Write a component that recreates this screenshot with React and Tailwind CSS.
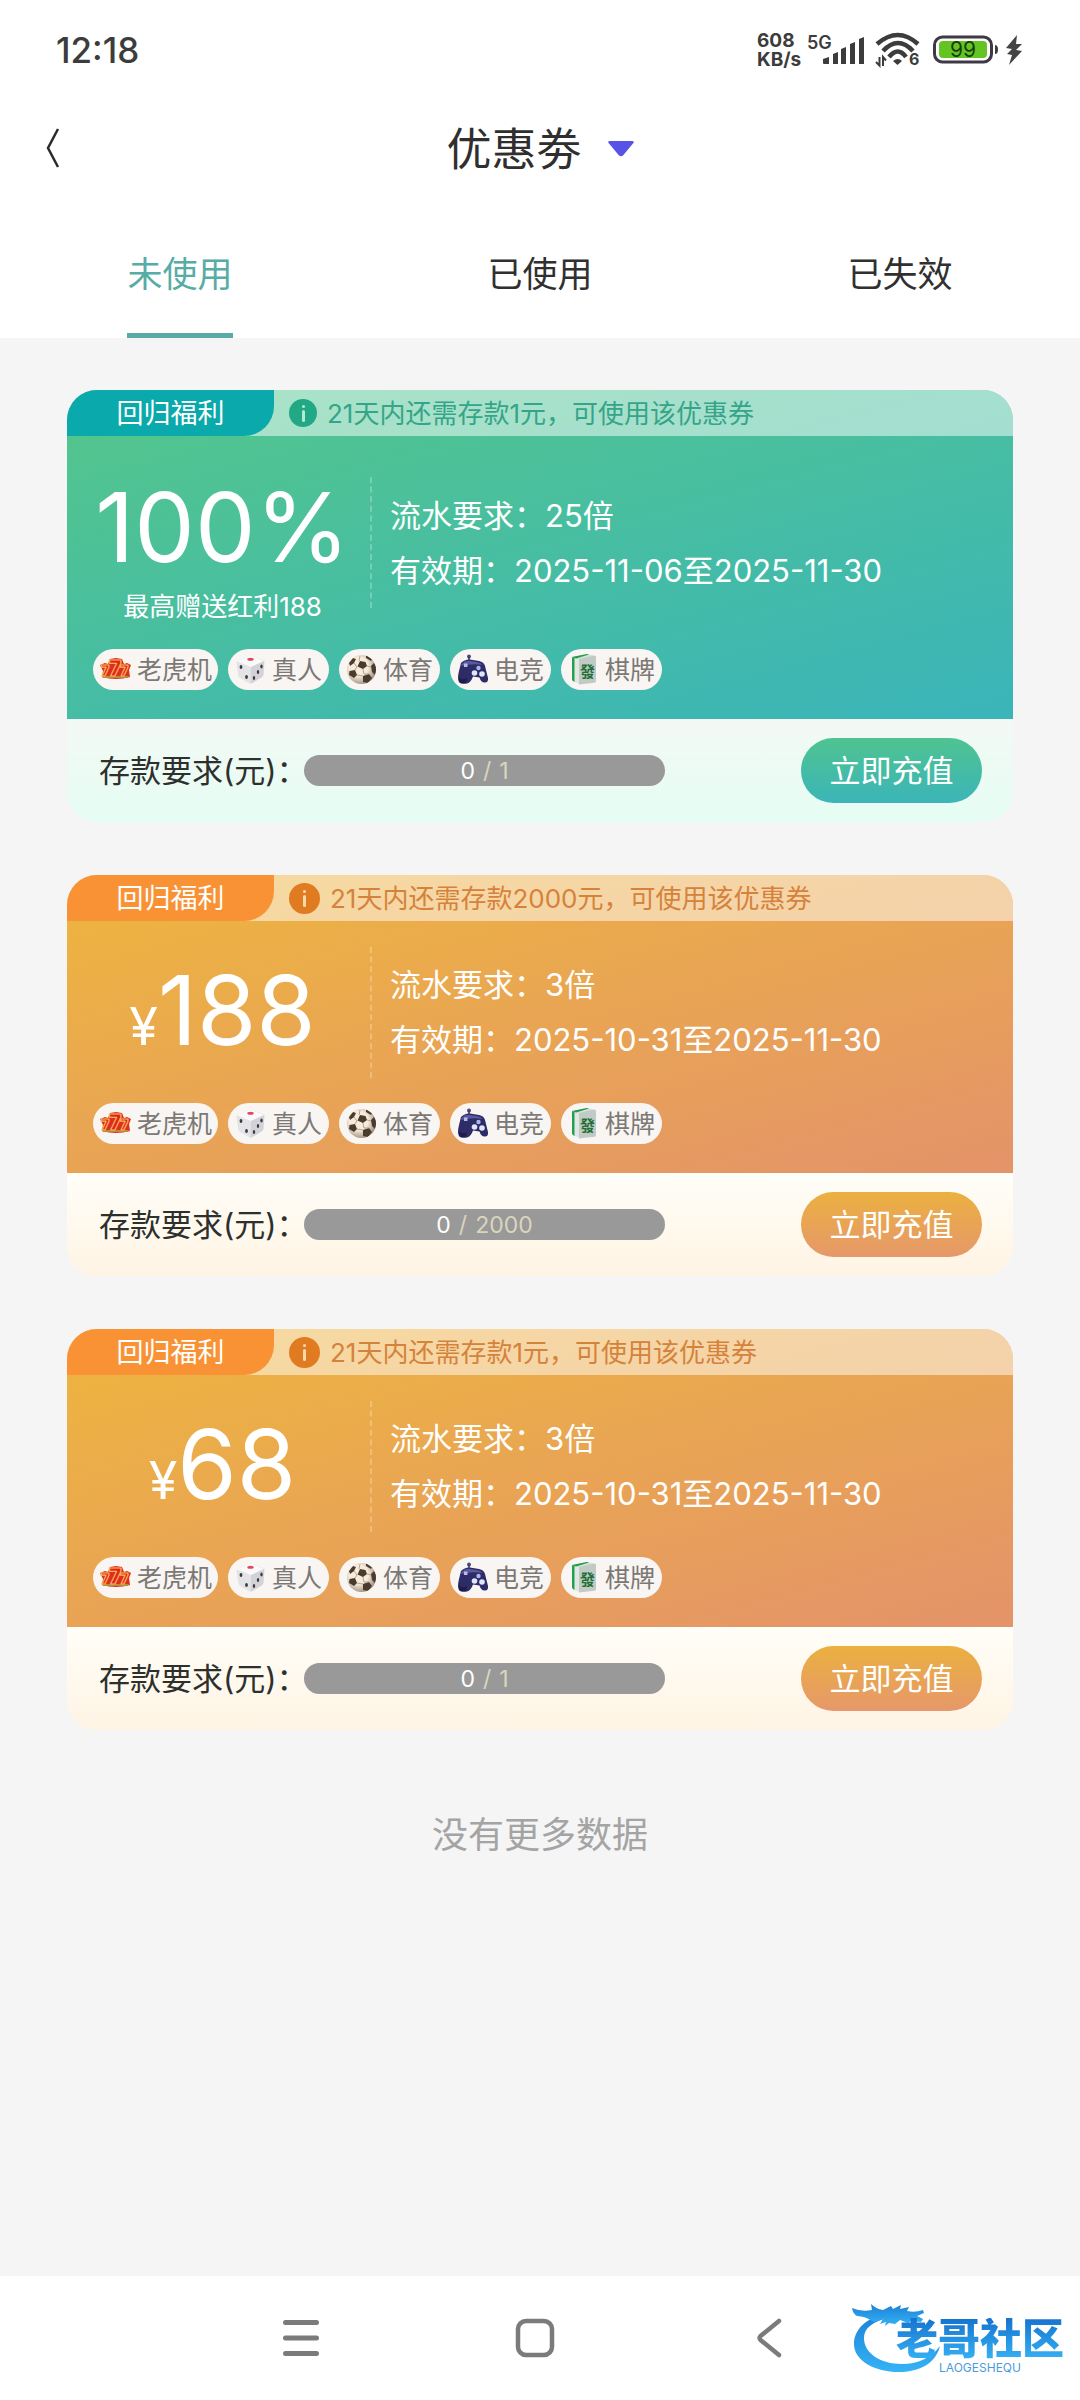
import React from "react";

const THEMES = {
  green: {
    head: "bg-[linear-gradient(165deg,#52c58e_8%,#3bb5b8_96%)]",
    badge: "bg-[#0aa9ab]",
    notice: "text-[#34a588]",
    dot: "bg-[#22a884] size-7",
    dotMark: "bg-[#b5ead3]",
    foot: "bg-[linear-gradient(180deg,#f3f9f4,#e5fdf4)]",
    button: "bg-[linear-gradient(180deg,#4fc391,#3bb5b8)]",
  },
  orange: {
    head: "bg-[linear-gradient(165deg,#edb341_8%,#e49469_98%)]",
    badge: "bg-[#f99234]",
    notice: "text-[#d5823b]",
    dot: "bg-[#e17b22] size-[31px]",
    dotMark: "bg-[#f8d9a8]",
    foot: "bg-[linear-gradient(180deg,#fffef8,#fff4e4)]",
    button: "bg-[linear-gradient(180deg,#ebb040,#e6986a)]",
  },
};

const COUPONS = [
  {
    id: "c1",
    theme: "green",
    notice: "21天内还需存款1元，可使用该优惠券",
    value: "100%",
    sub: "最高赠送红利188",
    times: "25倍",
    dates: "2025-11-06至2025-11-30",
    goal: 1,
  },
  {
    id: "c2",
    theme: "orange",
    notice: "21天内还需存款2000元，可使用该优惠券",
    currency: "¥",
    value: "188",
    times: "3倍",
    dates: "2025-10-31至2025-11-30",
    goal: 2000,
  },
  {
    id: "c3",
    theme: "orange",
    notice: "21天内还需存款1元，可使用该优惠券",
    currency: "¥",
    value: "68",
    times: "3倍",
    dates: "2025-10-31至2025-11-30",
    goal: 1,
  },
];

function SlotIcon() {
  const seven = {
    fontFamily: "Inter, sans-serif",
    fontWeight: 900,
    stroke: "#f6b25a",
    strokeWidth: 1.2,
    strokeLinejoin: "round",
    fill: "#e2231a",
  };
  return (
    <svg viewBox="0 0 31 31" className="size-[31px]" aria-hidden="true">
      <path d="M0 11l5-2 3 1 2-5 6-1 6 1 2 5 3-1 4 2-2 5 1 7q-14 4-28 0l1-6z" fill="#dd2f20" />
      <path d="M3 24l25 0 1-2-27 0z" fill="#b98a3a" />
      <text x="1" y="22" fontSize="14" {...seven}>7</text>
      <text x="20" y="22" fontSize="14" {...seven}>7</text>
      <text x="9" y="22" fontSize="21" {...seven}>7</text>
    </svg>
  );
}

function DiceIcon() {
  return (
    <svg viewBox="0 0 31 31" className="size-[31px]" aria-hidden="true">
      <path d="M14 2q1.500-.6 3 0l11 4q1.500.6 1.500 2l-1 13q-.2 1.500-1.500 2.300l-10 6q-1.500.7-3 0L5 24q-1.500-.7-1.700-2.300L1.500 9q0-1.500 1.500-2.200z" fill="#e4e4e6" />
      <path d="M14 2q1.500-.6 3 0l12 5-13 6L2 7.300z" fill="#fafafa" />
      <path d="M16 13l13.300-6-1 14q-.2 1.500-1.500 2.300l-10 6-1 .2z" fill="#d3d3d7" />
      <ellipse cx="15.500" cy="5.300" rx="3.200" ry="1.500" fill="#e5455c" />
      <ellipse cx="6" cy="13" rx="1.400" ry="2" fill="#3a3a44" />
      <ellipse cx="11.500" cy="23" rx="1.400" ry="2" fill="#3a3a44" />
      <ellipse cx="26.500" cy="12.500" rx="1.200" ry="1.900" fill="#3a3a44" />
      <ellipse cx="23" cy="18" rx="1.200" ry="1.900" fill="#3a3a44" />
      <ellipse cx="19" cy="24" rx="1.200" ry="1.900" fill="#3a3a44" />
    </svg>
  );
}

function BallIcon() {
  return (
    <svg viewBox="0 0 31 31" className="size-[31px]" aria-hidden="true">
      <defs>
        <radialGradient id="ball" cx="0.4" cy="0.4" r="0.65">
          <stop offset="0.5" stopColor="#f6ebdc" />
          <stop offset="1" stopColor="#9c8a78" />
        </radialGradient>
        <clipPath id="ballClip"><circle cx="15.500" cy="15.500" r="14.500" /></clipPath>
      </defs>
      <circle cx="15.500" cy="15.500" r="14.500" fill="url(#ball)" />
      <g clipPath="url(#ballClip)" fill="#4a3b2c">
        <path d="M14 7l5.500 1 1.500 4-4 3-5.500-2.500z" />
        <path d="M3 9l4-5 3 1-2 4-4 3z" />
        <path d="M3.500 17l5.500-1 2 5-3 3-5-3z" />
        <path d="M17 22l6-2 3 4-4 5-5-1z" />
        <path d="M25 12l3-3 3 6-2 6-3-3z" />
        <path d="M20 1l6 4-1 2-5-3z" />
      </g>
      <g clipPath="url(#ballClip)" stroke="#a39380" strokeWidth="0.800" fill="none">
        <path d="M8 9l3 4-2 3M17 15l1 5 5 0M21 12l4 1M11 21l6 1M13 7l1-5" />
      </g>
    </svg>
  );
}

function PadIcon() {
  return (
    <svg viewBox="0 0 31 31" className="size-[31px]" aria-hidden="true">
      <circle cx="12" cy="2.500" r="2" fill="#4b4a7d" />
      <path d="M12 3v5" stroke="#37366e" strokeWidth="1.500" />
      <path d="M4 9q4-4 9-3.500l9 1.500q5 1 6 5l3 12q.5 5-3.500 4.500-3.500 0-5-5l-6.500-1q-2 6-6 7-5 1-8-1.500Q0 25 2 17z" fill="#2d2c66" />
      <path d="M4.500 10q4-4 9-3l8 1.500q3 .8 4 2.500-9-2-21 1z" fill="#5a59a0" />
      <path d="M7 9.500h3.500v3.500H7z" fill="#b9bbe6" />
      <circle cx="17.500" cy="19" r="2.800" fill="#dfe6fb" />
      <circle cx="25" cy="20" r="2.800" fill="#dfe6fb" />
      <circle cx="21.500" cy="14" r="2.200" fill="#a9b6ea" />
      <path d="M2 23q3 4 8 1l-1 4q-4 3-7 0z" fill="#1d1c4b" />
    </svg>
  );
}

function TileIcon() {
  return (
    <svg viewBox="0 0 31 31" className="size-[31px]" aria-hidden="true">
      <path d="M4 3l15-3 8 2-16 4z" fill="#cfe3d6" />
      <path d="M4 3l7 3v24l-6-3q-1-.5-1-2z" fill="#dfe8e2" />
      <path d="M4 3l2.500 1v24L5 27q-1-.5-1-2z" fill="#22a04f" />
      <path d="M11 5l15-3.500q2 0 2 1.500v24q0 1.500-1.500 1.700L11 30.500z" fill="#c2cac5" />
      <path d="M4 3l15-3 2 .5L8 4.500z" fill="#1f9a4b" />
      <text x="12" y="23" fontSize="15" fontWeight="700" fontFamily="Noto Sans CJK TC, sans-serif" fill="#1d6f35">發</text>
    </svg>
  );
}

const CATEGORIES = [
  { name: "老虎机", Icon: SlotIcon },
  { name: "真人", Icon: DiceIcon },
  { name: "体育", Icon: BallIcon },
  { name: "电竞", Icon: PadIcon },
  { name: "棋牌", Icon: TileIcon },
];

function StatusBar() {
  return (
    <div className="flex h-[100px] items-center justify-between pl-14 pr-[57px] text-[#3c3c3c]">
      <time className="text-[35px] font-medium leading-none">12:18</time>
      <div className="flex items-center">
        <div className="w-[50px] text-[19px] font-bold leading-[19px]">
          <div>608</div>
          <div>KB/s</div>
        </div>
        <svg viewBox="0 0 58 36" className="h-9 w-[58px] overflow-visible" aria-label="5G">
          <text x="0" y="17" fontSize="18" fontWeight="600" fontFamily="Inter, sans-serif" fill="#3c3c3c">5G</text>
          <g fill="#3c3c3c">
            <path d="M16 27l6-2v7h-5q-1 0-1-1z" />
            <path d="M26 22l5-2v12h-5z" />
            <path d="M34 17l5-2v17h-5z" />
            <path d="M43 12l5-2v22h-5z" />
            <path d="M52 7l5-2v27h-5z" />
          </g>
        </svg>
        <svg viewBox="0 0 46 36" className="ml-2.5 h-9 w-[46px] overflow-visible" aria-label="Wi-Fi">
          <g fill="none" stroke="#3c3c3c" strokeWidth="4.500">
            <path d="M2 12Q23-6 43 12" />
            <path d="M8 19Q23 3 38 19" />
            <path d="M14 25Q23 14 31 25" />
          </g>
          <path d="M18 29q5-4 9 0l-4.500 4z" fill="#3c3c3c" />
          <path d="M1 30l3.500 3.500V25M8 34v-9l3 3.500" stroke="#3c3c3c" strokeWidth="2" fill="none" />
          <text x="34" y="33" fontSize="16" fontWeight="700" fontFamily="Inter, sans-serif" fill="#3c3c3c">6</text>
        </svg>
        <svg viewBox="0 0 68 30" className="ml-3 h-[30px] w-[68px] overflow-visible" aria-label="电量99%">
          <rect x="1.500" y="2" width="57" height="25" rx="8" fill="#fff" stroke="#3f3845" strokeWidth="3" />
          <rect x="6" y="6" width="48" height="17" rx="4" fill="#64c522" />
          <path d="M62 10q3 0 3 4.500t-3 4.500z" fill="#3c3c3c" />
          <text x="30" y="22" textAnchor="middle" fontSize="21" fontWeight="400" fontFamily="Inter, sans-serif" fill="#173f0c">99</text>
        </svg>
        <svg viewBox="0 0 18 30" className="ml-1 h-[30px] w-[18px]" aria-label="充电中">
          <path d="M12 0L1 13l6 1-5 5 5 1-3 10L17 16l-6-1 6-6-6 0z" fill="#444" />
        </svg>
      </div>
    </div>
  );
}

function Coupon({ data }) {
  const t = THEMES[data.theme];
  return (
    <article className="overflow-hidden rounded-[30px]">
      <div className={t.head}>
        <div className="flex h-[46px] items-center bg-white/50">
          <div className={`${t.badge} flex h-full w-[207px] items-center justify-center rounded-br-[30px] pt-0.5 text-[27px] text-white`}>
            回归福利
          </div>
          <span className={`${t.dot} ml-[15px] flex flex-col items-center justify-center gap-0.5 rounded-full`} aria-hidden="true">
            <span className={`${t.dotMark} size-[3px] rounded-full`} />
            <span className={`${t.dotMark} h-3 w-[3px] rounded-full`} />
          </span>
          <p className={`${t.notice} ml-2.5 pt-0.5 text-[26px] leading-none`}>{data.notice}</p>
        </div>

        <div className={`flex items-center ${data.sub ? "h-[213px]" : "h-[182px]"}`}>
          <div className="flex w-[303px] flex-col items-center pl-2 pt-3 text-white">
            <div className="flex items-baseline text-[96px] leading-[108px]">
              {data.currency && <span className="text-[52px]">{data.currency}</span>}
              <span>{data.value}</span>
            </div>
            {data.sub && <p className="mt-2 text-[26px] leading-9">{data.sub}</p>}
          </div>
          <div className="h-[131px] border-l-2 border-dashed border-white/25" />
          <dl className="ml-[18px] text-[31px] leading-[55px] text-white">
            <div className="flex">
              <dt>流水要求：</dt>
              <dd>{data.times}</dd>
            </div>
            <div className="flex">
              <dt>有效期：</dt>
              <dd>{data.dates}</dd>
            </div>
          </dl>
        </div>

        <ul className="flex gap-2.5 pb-[29px] pl-[26px]">
          {CATEGORIES.map(({ name, Icon }) => (
            <li key={name} className="flex h-[41px] min-w-[101px] items-center gap-1.5 rounded-full bg-[#f8f5f2] pl-[7px] pr-1.5 text-[25px] leading-none text-[#7b7875]">
              <Icon />
              <span className="pt-0.5">{name}</span>
            </li>
          ))}
        </ul>
      </div>

      <div className={`${t.foot} flex items-center py-[19px] pl-8 pr-[31px]`}>
        <span id={`${data.id}-label`} className="w-[205px] whitespace-nowrap text-[31px] leading-none text-[#2e302e]">存款要求(元)：</span>
        <div
          role="progressbar"
          aria-labelledby={`${data.id}-label`}
          aria-valuemin={0}
          aria-valuenow={0}
          aria-valuemax={data.goal}
          className="flex h-[31px] w-[361px] items-center justify-center gap-2 rounded-full bg-[#999] pt-0.5 text-[23px] leading-none text-[#d9d6bd]"
        >
          <span className="text-white">0</span>
          <span>/</span>
          <span>{data.goal}</span>
        </div>
        <button type="button" className={`${t.button} ml-auto h-[65px] w-[181px] rounded-full text-[31px] leading-none text-white`}>
          立即充值
        </button>
      </div>
    </article>
  );
}

function SiteLogo() {
  return (
    <div className="absolute bottom-6 right-4 flex items-end">
      <svg viewBox="0 0 92 72" className="-mr-12 h-[72px] w-[92px]" aria-hidden="true">
        <defs>
          <linearGradient id="dragon" x1="0" y1="0" x2="0" y2="1">
            <stop offset="0" stopColor="#1d7fd6" />
            <stop offset="1" stopColor="#35b4f5" />
          </linearGradient>
        </defs>
        <g fill="url(#dragon)">
          <path d="M36 9C14 13 2 26 2 40c0 17 22 29 48 28 20-1 34-10 38-26-9 12-22 18-38 18-22 0-38-11-38-26 0-10 8-16 26-21z" />
          <path d="M0 4q9 4 20 2l-1-6q5 5 12 6l8-4 2 3 8-4-1 4 9-2-2 4q8 2 16-1l1 3-7 3 6 3-2 3-10-1-3 2-8-3-5 4-6-1-4 3 1-4-6 2 3-5-9 3q-9-6-17-6-4-2-5-8z" />
        </g>
      </svg>
      <div className="flex flex-col items-center">
        <span className="bg-[linear-gradient(180deg,#1673cf,#36b1f4)] bg-clip-text text-[42px] font-black leading-[42px] text-transparent">老哥社区</span>
        <span className="text-[12px] leading-4 text-[#4a9bdc]">LAOGESHEQU</span>
      </div>
    </div>
  );
}

export default function App() {
  return (
    <div className="flex min-h-screen flex-col bg-[#f5f5f5] font-['Inter','Noto_Sans_CJK_SC',sans-serif]" lang="zh-CN">
      <header className="bg-white">
        <StatusBar />
        <div className="grid h-24 grid-cols-[1fr_auto_1fr] items-center">
          <button type="button" aria-label="返回" className="ml-[45px] flex h-16 w-8 items-center">
            <svg viewBox="0 0 16 42" className="h-[42px] w-4" fill="none" stroke="#2b2b2b" strokeWidth="2.500" aria-hidden="true">
              <path d="M13 2L3 21l10 19" />
            </svg>
          </button>
          <button type="button" className="flex items-center gap-[26px] pt-0.5 text-[45px] leading-none text-[#2f2f2f]">
            <h1>优惠劵</h1>
            <svg viewBox="0 0 26 16" className="h-4 w-[26px]" aria-hidden="true">
              <path d="M2 0h22q3 0 1 2.500L15 14.500q-2 1.500-4 0L1 2.500Q-1 0 2 0z" fill="#5853e6" />
            </svg>
          </button>
        </div>
        <nav className="grid h-[142px] grid-cols-3" role="tablist">
          {["未使用", "已使用", "已失效"].map((tab, i) => (
            <button
              key={tab}
              type="button"
              role="tab"
              aria-selected={i === 0}
              className={`mx-auto flex items-center border-b-[5px] pt-5 text-[35px] leading-none ${i === 0 ? "border-[#57aca5] text-[#57aca5]" : "border-transparent text-[#303030]"}`}
            >
              {tab}
            </button>
          ))}
        </nav>
      </header>

      <main className="flex flex-1 flex-col gap-[53px] px-[67px] pt-[52px]">
        {COUPONS.map((c) => (
          <Coupon key={c.id} data={c} />
        ))}
        <p className="pt-8 text-center text-[36px] leading-10 text-[#a4a4a4]">没有更多数据</p>
      </main>

      <footer className="relative bg-white">
        <div className="ml-[17%] grid h-[124px] w-[65%] grid-cols-3 items-center justify-items-center">
          <button type="button" aria-label="最近任务">
            <svg viewBox="0 0 38 40" className="h-10 w-[38px]" fill="none" stroke="#7b7b7b" strokeWidth="5" strokeLinecap="round" aria-hidden="true">
              <path d="M3.500 4.500h31M3.500 20h31M3.500 35.500h31" />
            </svg>
          </button>
          <button type="button" aria-label="主屏幕">
            <svg viewBox="0 0 40 40" className="size-10" fill="none" stroke="#7b7b7b" strokeWidth="4.500" aria-hidden="true">
              <rect x="3" y="3" width="34" height="34" rx="8" />
            </svg>
          </button>
          <button type="button" aria-label="返回上一页">
            <svg viewBox="0 0 26 40" className="h-10 w-[26px]" fill="none" stroke="#7b7b7b" strokeWidth="4.500" strokeLinecap="round" strokeLinejoin="round" aria-hidden="true">
              <path d="M23 3L4.500 18q-2 2 0 4L23 37" />
            </svg>
          </button>
        </div>
        <SiteLogo />
      </footer>
    </div>
  );
}
